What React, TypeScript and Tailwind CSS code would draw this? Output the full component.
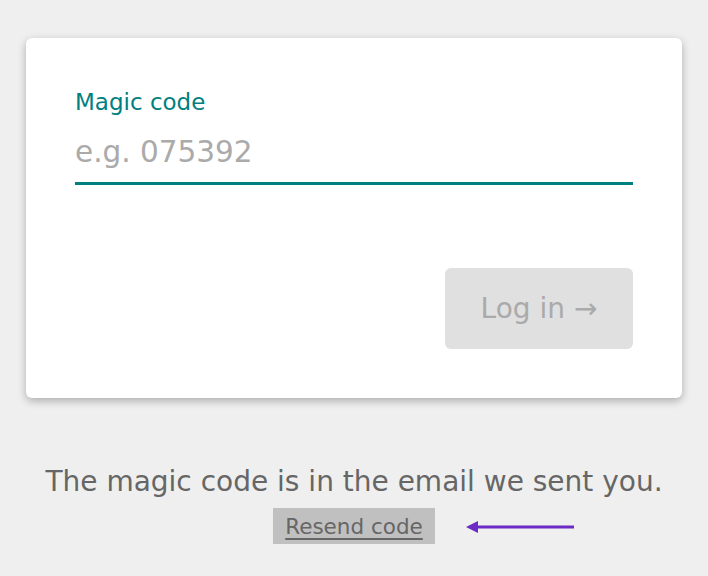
import React, { useState } from 'react';

const App: React.FC = () => {
  const [code, setCode] = useState('');

  return (
    <div
      className="min-h-screen bg-[#efefef] px-[26px] pt-[38px]"
      style={{ fontFamily: '"DejaVu Sans", "Open Sans", sans-serif' }}
    >
      {/* Card */}
      <div className="w-[656px] bg-white rounded-[6px] shadow-[0_3px_8px_rgba(0,0,0,0.28)] px-[49px] pt-[50px] pb-[49px]">
        <label className="block text-[23px] leading-[28px] text-[#008080]">Magic code</label>
        <input
          type="text"
          autoFocus
          value={code}
          onChange={(e) => setCode(e.target.value)}
          placeholder="e.g. 075392"
          className="block w-full mt-[16px] pb-[10px] text-[29.5px] leading-[40px] text-[#333] placeholder-[#aaaaaa] caret-[#222] border-b-[3px] border-[#008080] outline-none"
        />
        <div className="flex justify-end mt-[83px]">
          <button
            disabled
            className="w-[188px] h-[81px] rounded-[6px] bg-[#e0e0e0] text-[#aaaaaa] text-[28px]"
          >
            Log in →
          </button>
        </div>
      </div>

      {/* Footer */}
      <div className="w-[656px] flex flex-col items-center mt-[67px]">
        <p className="text-[28px] leading-[34px] text-[#666666]">The magic code is in the email we sent you.</p>
        <div className="relative mt-[9px]">
          <button className="bg-[#c0c0c0] px-[12px] h-[36px] leading-[38px] text-[21.5px] text-[#666666] underline underline-offset-[4px]">
            Resend code
          </button>
          <svg
            className="absolute left-[192px] top-[11px]"
            width="112"
            height="16"
            viewBox="0 0 112 16"
          >
            <line x1="8" y1="8" x2="109" y2="8" stroke="#6b2bc4" strokeWidth="3" />
            <polygon points="1,8 13,2 13,14" fill="#6b2bc4" />
          </svg>
        </div>
      </div>
    </div>
  );
};

export default App;
